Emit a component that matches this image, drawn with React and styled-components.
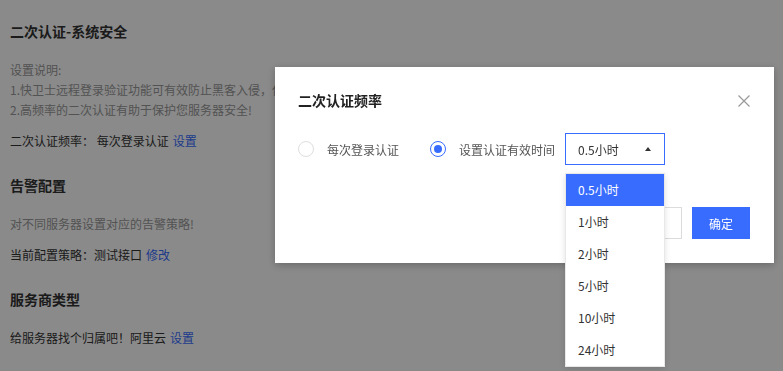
import React from 'react';
import styled, { createGlobalStyle } from 'styled-components';

const GlobalStyle = createGlobalStyle`
  html, body {
    margin: 0;
    padding: 0;
    background: #fff;
  }
  body {
    font-family: "Noto Sans CJK SC", "Noto Sans", sans-serif;
    font-size: 12px;
    color: #333;
  }
  * { box-sizing: border-box; }
`

const Page = styled.div`
  padding: 21px 10px 0;
  height: 371px;
  overflow: hidden;
`

const Section = styled.section`
  margin-bottom: 24px;
`

const Heading = styled.h3`
  margin: 0 0 19px;
  font-size: 14px;
  line-height: 20px;
  font-weight: bold;
  color: #333;
`

const Desc = styled.div`
  margin-bottom: 11px;
  line-height: 20px;
  color: #999;
  white-space: nowrap;
`

const Row = styled.div`
  line-height: 20px;
  color: #333;
  white-space: nowrap;
`

const Link = styled.a`
  color: #386cff;
  text-decoration: none;
  margin-left: 4px;
  cursor: pointer;
`

const Mask = styled.div`
  position: fixed;
  inset: 0;
  background: rgba(0, 0, 0, 0.46);
`

const Modal = styled.div`
  position: fixed;
  left: 275px;
  top: 67px;
  width: 499px;
  background: #fff;
  padding: 23px 24px 24px 23px;
  box-shadow: 0 2px 8px rgba(0, 0, 0, 0.25);
  display: flex;
  flex-direction: column;
`

const Header = styled.div`
  display: flex;
  align-items: center;
  justify-content: space-between;
  height: 20px;
`

const Title = styled.div`
  font-size: 14px;
  font-weight: bold;
  color: #222;
`

const Close = styled.button`
  border: none;
  background: none;
  padding: 0;
  width: 12px;
  height: 12px;
  margin-top: 2px;
  display: flex;
  cursor: pointer;
`

const Body = styled.div`
  display: flex;
  align-items: center;
  margin-top: 23px;
  height: 32px;
`

const Option = styled.label`
  display: flex;
  align-items: center;
  gap: 13px;
  margin-right: ${({ $space }) => $space}px;
  color: #555;
  cursor: pointer;
`

const Radio = styled.span`
  width: 16px;
  height: 16px;
  border-radius: 50%;
  border: 1px solid ${({ $checked }) => ($checked ? '#386cff' : '#dedede')};
  display: flex;
  align-items: center;
  justify-content: center;
  &::after {
    content: '';
    width: 8px;
    height: 8px;
    border-radius: 50%;
    background: ${({ $checked }) => ($checked ? '#386cff' : 'transparent')};
  }
`

const SelectWrap = styled.div`
  position: relative;
`

const SelectBox = styled.div`
  width: 100px;
  height: 32px;
  border: 1px solid #386cff;
  padding: 0 12px;
  display: flex;
  align-items: center;
  justify-content: space-between;
  color: #333;
`

const Arrow = styled.span`
  width: 0;
  height: 0;
  border-left: 3.5px solid transparent;
  border-right: 3.5px solid transparent;
  border-bottom: 4px solid #333;
  margin-right: 1px;
`

const Menu = styled.ul`
  position: absolute;
  left: 0;
  top: 40px;
  width: 100px;
  margin: 0;
  padding: 0;
  list-style: none;
  background: #fff;
  border: 1px solid #e8e8e8;
  box-shadow: 0 2px 6px rgba(0, 0, 0, 0.12);
  z-index: 2;
`

const Item = styled.li`
  height: 32px;
  line-height: 32px;
  padding-left: 12px;
  color: ${({ $active }) => ($active ? '#fff' : '#333')};
  background: ${({ $active }) => ($active ? '#386cff' : '#fff')};
`

const Footer = styled.div`
  display: flex;
  justify-content: flex-end;
  gap: 10px;
  margin-top: 42px;
`

const Button = styled.button`
  width: 58px;
  height: 32px;
  font-family: inherit;
  font-size: 12px;
  border: 1px solid ${({ $primary }) => ($primary ? '#386cff' : '#dcdcdc')};
  background: ${({ $primary }) => ($primary ? '#386cff' : '#fff')};
  color: ${({ $primary }) => ($primary ? '#fff' : '#555')};
  cursor: pointer;
`

const hours = ['0.5小时', '1小时', '2小时', '5小时', '10小时', '24小时'];

export default function App() {
  return (
    <>
      <GlobalStyle />
      <Page>
        <Section>
          <Heading>二次认证-系统安全</Heading>
          <Desc>
            设置说明:
            <br />
            1.快卫士远程登录验证功能可有效防止黑客入侵，保障您的服务器登录安全！
            <br />
            2.高频率的二次认证有助于保护您服务器安全!
          </Desc>
          <Row>
            二次认证频率：&nbsp;每次登录认证<Link>设置</Link>
          </Row>
        </Section>
        <Section>
          <Heading>告警配置</Heading>
          <Desc>对不同服务器设置对应的告警策略!</Desc>
          <Row>
            当前配置策略：测试接口<Link>修改</Link>
          </Row>
        </Section>
        <Section>
          <Heading>服务商类型</Heading>
          <Row>
            给服务器找个归属吧！阿里云<Link>设置</Link>
          </Row>
        </Section>
      </Page>

      <Mask />
      <Modal>
        <Header>
          <Title>二次认证频率</Title>
          <Close aria-label="关闭">
            <svg width="12" height="12" viewBox="0 0 12 12">
              <path d="M0.5 0.5 L11.5 11.5 M11.5 0.5 L0.5 11.5" stroke="#999" strokeWidth="1.2" />
            </svg>
          </Close>
        </Header>
        <Body>
          <Option $space={31}>
            <Radio />
            每次登录认证
          </Option>
          <Option $space={10}>
            <Radio $checked />
            设置认证有效时间
          </Option>
          <SelectWrap>
            <SelectBox>
              0.5小时
              <Arrow />
            </SelectBox>
            <Menu>
              {hours.map((h, i) => (
                <Item key={h} $active={i === 0}>
                  {h}
                </Item>
              ))}
            </Menu>
          </SelectWrap>
        </Body>
        <Footer>
          <Button>取消</Button>
          <Button $primary>确定</Button>
        </Footer>
      </Modal>
    </>
  );
}
